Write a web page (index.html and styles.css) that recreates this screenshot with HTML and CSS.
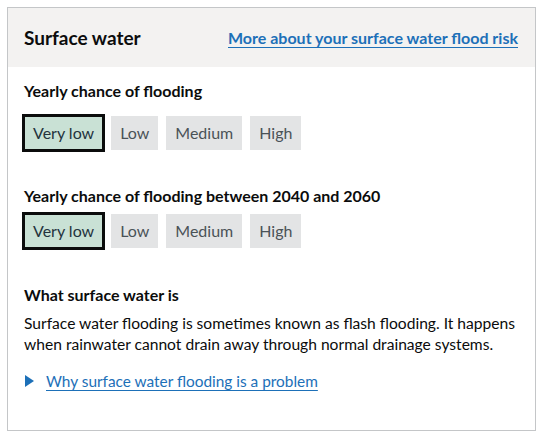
FILE: index.html
```html
<!DOCTYPE html>
<html lang="en">
<head>
<meta charset="utf-8">
<title>Surface water</title>
<link rel="stylesheet" href="styles.css">
</head>
<body>
<section class="card">
  <header class="card-header">
    <h2 class="card-title">Surface water</h2>
    <a class="link" href="#">More about your surface water flood risk</a>
  </header>
  <div class="card-body">
    <h3 class="label first">Yearly chance of flooding</h3>
    <ul class="tags">
      <li class="tag selected">Very low</li>
      <li class="tag">Low</li>
      <li class="tag">Medium</li>
      <li class="tag">High</li>
    </ul>
    <h3 class="label second">Yearly chance of flooding between 2040 and 2060</h3>
    <ul class="tags tight">
      <li class="tag selected">Very low</li>
      <li class="tag">Low</li>
      <li class="tag">Medium</li>
      <li class="tag">High</li>
    </ul>
    <h3 class="label third">What surface water is</h3>
    <p class="text">Surface water flooding is sometimes known as flash flooding. It happens when rainwater cannot drain away through normal drainage systems.</p>
    <details class="details">
      <summary class="summary"><span class="arrow"></span><span class="link small">Why surface water flooding is a problem</span></summary>
    </details>
  </div>
</section>
</body>
</html>
```
FILE: styles.css
```css
html, body {
  margin: 0;
  padding: 0;
  background: #ffffff;
}
body {
  font-family: Lato, "Liberation Sans", Arial, sans-serif;
  color: #0b0c0c;
  font-size: 16px;
}
.card {
  margin: 7px;
  width: 527px;
  height: 422px;
  border: 1px solid #c4c6c8;
}
.card-header {
  height: 59px;
  background: #f3f2f1;
  display: flex;
  align-items: center;
  justify-content: space-between;
  padding: 0 17px 0 16px;
}
.card-title {
  margin: 0;
  font-size: 19px;
  font-weight: 700;
}
.link {
  color: #1d70b8;
  text-decoration: underline;
  text-underline-offset: 3px;
  text-decoration-thickness: 1px;
  font-size: 16px;
}
.link.small {
  font-size: 15.4px;
}
.card-header .link {
  font-weight: 700;
}
.card-body {
  padding: 13px 10px 0 16px;
}
.label {
  margin: 0;
  font-size: 16px;
  font-weight: 700;
  line-height: 22px;
}
.label.second {
  margin-top: 35px;
}
.label.third {
  margin-top: 36px;
}
.tags {
  list-style: none;
  margin: 14px 0 0 0;
  padding: 0;
  display: flex;
  gap: 8px;
}
.tags.tight {
  margin-top: 7px;
}
.tag {
  height: 34px;
  line-height: 34px;
  padding: 0 9px;
  background: #e3e4e5;
  color: #4a5257;
  font-size: 16px;
}
.tag.selected {
  background: #c9e1d5;
  color: #24333d;
  outline: 3px solid #0b0c0c;
  outline-offset: -1px;
}
.text {
  margin: 7px 0 0 0;
  line-height: 21px;
  font-size: 15.6px;
}
.details {
  margin-top: 15px;
}
.summary {
  list-style: none;
  display: flex;
  align-items: center;
  line-height: 22px;
  cursor: pointer;
}
.summary::-webkit-details-marker {
  display: none;
}
.arrow {
  width: 0;
  height: 0;
  border-style: solid;
  border-width: 6px 0 6px 9px;
  border-color: transparent transparent transparent #1d70b8;
  margin: 0 12px 0 1px;
}
```
